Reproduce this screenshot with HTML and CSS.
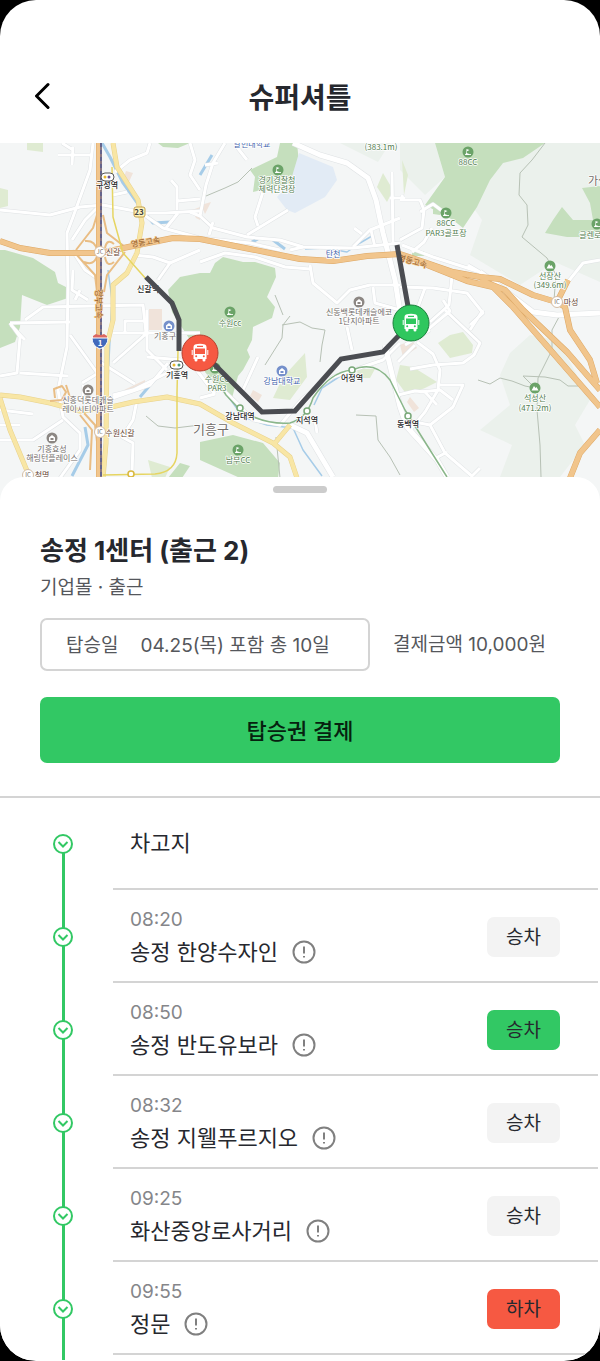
FILE: index.html
```
<!DOCTYPE html>
<html lang="ko">
<head>
  <meta charset="UTF-8">
  <meta name="viewport" content="width=device-width, initial-scale=1">
  <title>슈퍼셔틀</title>
  <link rel="stylesheet" href="styles.css">
</head>
<body>
  <div class="phone">
    <header class="header">
      <button type="button" class="back-button" aria-label="뒤로">
        <svg width="16" height="28" viewBox="0 0 16 28"><path d="M14 2.500L2.500 14L14 25.500"/></svg>
      </button>
      <h1 class="header-title">슈퍼셔틀</h1>
    </header>

    <svg class="map" viewBox="0 143 600 360" role="img" aria-label="노선 지도">
      <defs>
        <g id="streets">
          <path d="M0 210L50 215L80 207L103 205L140 212L163 228L200 238L250 243L280 250"/>
          <path d="M190 212L200 216L213 228L247 237L280 240L303 247L353 248L400 243"/>
          <path d="M93 143L90 170L73 217L67 233L68 287L67 347L58 390L63 417L80 433L80 450L60 478"/>
          <path d="M58 155H93M73 147L72 165M62 143L73 150M72 240L85 220L100 205M72 250L85 270L97 278"/>
          <path d="M115 172L130 160L147 153L150 143M113 195L127 192M138 213L166 213L200 211"/>
          <path d="M171 180L177 187L177 210M177 201L200 199M190 143L195 160L190 175L200 190M166 228L178 213"/>
          <path d="M225 143L213 163L206 185L200 216M218 163L205 165M236 146L247 160M209 235L213 222"/>
          <path d="M288 210L247 235M263 192L255 217L258 226M392 172L393 243M390 198H405"/>
          <path d="M400 218L370 230L353 247M371 230L375 247M354 228L362 234"/>
          <path d="M310 265L313 283L337 303L350 290L370 285L400 285M373 287L375 303L400 310M290 250L303 247"/>
          <path d="M200 262L225 253L255 257L285 267L310 269"/>
          <path d="M400 200L420 200L424 210L422 228L400 240M420 212L433 204L445 213M402 195L403 200"/>
          <path d="M402 245L433 257L480 272L468 265M412 252L424 242L432 228"/>
          <path d="M600 260L583 263L567 283M452 276L449 305L430 322M400 287L433 288L467 293L483 313L470 325M425 288L415 315"/>
          <path d="M445 310L480 343L474 355L463 363L433 365L410 369M483 310L470 330M415 340L450 311L443 300"/>
          <path d="M417 342L433 354L440 370L438 390L425 412L410 430M440 385L463 385L453 407L430 425M420 392L440 390L453 400M405 345L430 330M398 362L415 345"/>
          <path d="M398 395L415 391L425 392L437 405M404 420L430 425L445 453L473 477M436 458L447 452M473 475L480 468"/>
          <path d="M10 323L70 322M10 323L20 337L17 373L0 376M11 325L25 340M70 335L98 374M20 373L68 376M82 383L100 372"/>
          <path d="M113 333H200M147 310V350L167 370M147 321H125V333M200 355L167 373L133 390L113 395M113 363L147 333M100 362L135 384"/>
          <path d="M137 400L133 420L122 437L133 443L132 473M0 440L33 440L63 420M33 414L0 410M107 400L150 385L168 363"/>
          <path d="M25 320L43 307L143 305L146 333M73 270L72 290L88 300M158 280L170 263L153 257L133 255M170 263L200 250M75 300L80 290"/>
          <path d="M220 387L237 403L253 420L280 425L303 398L333 377L383 360L400 343M347 327L352 350M258 357L243 390M200 398L215 394"/>
          <path d="M83 385V398H107M0 425H20M147 357L182 360M195 368L215 394M317 433L315 420L303 415"/>
        </g>
        <g id="avenues">
          <path d="M293 143L320 155L347 163L368 178L376 200L383 233L395 280L402 325"/>
          <path d="M480 272L500 287L533 312L557 315L600 313"/>
          <path d="M290 425L307 433L333 477"/>
          <path d="M385 345L400 407L407 427L437 460L447 477"/>
        </g>
        <g id="bus">
          <path fill-rule="evenodd" d="M-5 -8.500Q0 -9.800 5 -8.500Q6.500 -8 6.500 -6V6H5.500V7Q5.500 8.500 4 8.500Q2.500 8.500 2.500 7V6H-2.500V7Q-2.500 8.500 -4 8.500Q-5.500 8.500 -5.500 7V6H-6.500V-6Q-6.500 -8 -5 -8.500ZM-3 -7.200V-6H3V-7.200ZM-5 -4.500V1H5V-4.500ZM-4.800 3.200A1 1 0 1 0 -2.800 3.200A1 1 0 1 0 -4.800 3.200M2.800 3.200A1 1 0 1 0 4.800 3.200A1 1 0 1 0 2.800 3.200"/>
          <path d="M-8.300 -3H-7.300V2H-8.300ZM7.300 -3H8.300V2H7.300Z"/>
        </g>
        <g id="golf">
          <circle r="5.500"/>
          <path class="glyph" d="M-3 2.500Q-1.500 .500 0 1.500T3 2V3H-3ZM-1.500 -3L1.500 -2L-1 -.800V1.500H-1.700Z"/>
        </g>
        <g id="mountain">
          <circle r="5.500"/>
          <path class="glyph" d="M-3.500 2.500L-1 -2L.500 0L1.500 -1L3.500 2.500Z"/>
        </g>
        <g id="building">
          <circle r="5.500"/>
          <path class="glyph" fill-rule="evenodd" d="M-3 -.500L0 -3L3 -.500V3H-3ZM-1.500 0V2H1.500V0Z"/>
        </g>
      </defs>

      <rect class="land" y="143" width="600" height="360"/>

      <!-- hills and parks -->
      <path class="terrain" d="M470 143H600V282L555 262L520 285L470 255L482 220L440 160ZM400 143H435L445 177L425 195L400 170ZM340 143H390L378 162Z"/>
      <path class="terrain" d="M510 353L530 335L555 340L570 362L590 400L575 425L585 445L560 477H500L512 445L480 430L510 405L500 375Z"/>
      <path class="forest" d="M0 250H5L33 258L55 272L58 283L68 288V298L47 305L22 295L20 327L15 342L0 348Z"/>
      <path class="forest" d="M168 290L180 277L200 273H210L215 263L223 257L243 262H255L275 268L276 277L267 297L275 307L272 318L253 327L252 340L247 350L250 357L243 370L238 376L232 398L218 388L205 372L190 340L172 312Z"/>
      <path class="forest" d="M280 143H297L299 163L290 183L253 192L255 177L250 170L277 157Z"/>
      <path class="forest" d="M435 143H545L523 158L503 163L490 180L477 207L463 228L453 220L425 205L445 177Z"/>
      <path class="forest" d="M582 188L600 186V237H567L545 233L553 220L562 207L573 220H593L590 203Z"/>
      <path class="forest" d="M200 442L233 435L263 443L280 463L278 478H240L200 460ZM168 478L180 463L190 466L182 478ZM158 143H190L178 148L163 147ZM433 209L441 210L440 215L433 214ZM412 251H424V256H412Z"/>
      <path class="park" d="M305 353L307 377L290 400L273 398L283 377ZM438 343L450 335L463 332L473 345L472 353L450 358ZM400 365L413 367L437 382L425 388L407 395L396 380ZM27 143H43V152L27 150ZM0 188L8 190V206L0 208ZM383 173L393 190L387 202L377 187ZM148 460L170 467L165 478H152ZM357 369H375L370 378H358ZM402 160L408 175L404 195Z"/>
      <path class="lake" d="M299 153L333 167L337 180L325 197L295 213L287 210L277 197L290 183Z"/>
      <path class="block" d="M149 309H162V330H149ZM126 171L133 173L128 184L124 177ZM201 205L211 202L205 214ZM400 345L412 340L417 348L403 357ZM410 397L419 408L414 412L407 402ZM124 390L145 380V385L126 393ZM192 210L200 207V220L196 218ZM253 390L262 395L258 402L250 396Z"/>

      <path class="trail" d="M206 196L225 188L238 182L252 168M290 316L283 325L282 338L265 365M282 325L300 322L312 328L325 330L322 345L320 362M545 143L532 160L520 173L519 195L527 205L528 225L522 237L547 258L556 275L554 300M478 380L490 384L500 378L512 381L525 386L535 388L523 376L545 377L560 380L568 386L578 386M559 317L552 330L552 350L538 378L537 410L540 445L541 477M146 416L158 426L175 428L200 425M356 415L376 416L378 440L390 457L400 475M275 295L283 315M276 437L280 478"/>

      <!-- water -->
      <path class="river" d="M102 143L110 157L123 183L140 207L153 223L170 222M200 175L212 155M250 243L258 239M167 365L140 397M85 427L88 445L72 476"/>
      <path class="river" d="M273 240L285 249"/>
      <path class="river thin" d="M305 249L325 248L347 252L360 243L372 236M225 392L243 417L267 425L293 428L303 450L322 476M108 270L112 300L108 380M314 405L322 388L345 373"/>

      <!-- roads -->
      <use href="#streets" class="street-edge"/>
      <use href="#avenues" class="avenue-edge"/>
      <use href="#streets" class="street"/>
      <use href="#avenues" class="avenue"/>
      <path class="main-edge" d="M113 143L117 167L138 200L142 223L137 253L127 273L113 285V320L107 345L106 443L103 478M0 395L20 397L50 403L80 411L107 408L133 402L167 397L200 404L233 423L273 443L290 457L297 478M290 425L275 443M0 398L10 430L30 478"/>
      <path class="main" d="M113 143L117 167L138 200L142 223L137 253L127 273L113 285V320L107 345L106 443L103 478M0 395L20 397L50 403L80 411L107 408L133 402L167 397L200 404L233 423L273 443L290 457L297 478M290 425L275 443M0 398L10 430L30 478"/>
      <path class="ramp" d="M97 215L93 228L76 250M103 215L107 233L125 247M76 254L95 275L97 292M104 292L107 275L125 252M85 241Q95 240 97 250M84 262Q94 266 97 256M105 248Q107 238 114 244M105 257Q107 268 114 262M50 401L62 400L66 392L62 386L54 389L55 398M66 385L72 404M80 415L92 430L90 470M84 413L95 425L98 450"/>
      <path class="highway-edge" d="M0 241L20 248L50 253H100L133 246L173 238L200 239L250 249L300 259L333 261L367 256L400 254L427 263L453 272L480 277L500 279L533 295L553 301M427 265L467 281L493 287L513 307L600 407M480 280L505 290L523 310L567 352L600 390M568 280L557 302L565 307L570 330L590 360L597 383M600 430L580 453L570 478M99 143V478"/>
      <path class="highway" d="M0 241L20 248L50 253H100L133 246L173 238L200 239L250 249L300 259L333 261L367 256L400 254L427 263L453 272L480 277L500 279L533 295L553 301M427 265L467 281L493 287L513 307L600 407M480 280L505 290L523 310L567 352L600 390M568 280L557 302L565 307L570 330L590 360L597 383M600 430L580 453L570 478M99 143V478"/>
      <path class="rail" d="M101 143V478"/>
      <path class="rail-dash" d="M101 143V478"/>
      <path class="subway-yellow" d="M112 167L113 217L123 253L147 280M178 350L177 393V453Q176 472 155 474L103 475"/>
      <path class="subway-green" d="M214 375L226 395L240 410Q265 425 290 423Q307 418 313 398Q330 372 352 370Q375 360 390 380L405 410L430 450L447 477"/>
      <g class="station">
        <circle cx="240" cy="408" r="3"/>
        <circle cx="307" cy="411" r="3"/>
        <circle cx="352" cy="370" r="3"/>
        <circle cx="408" cy="416" r="3"/>
        <circle class="station-yellow" cx="131" cy="474" r="3"/>
      </g>

      <!-- places -->
      <g class="poi-green">
        <use href="#golf" x="278" y="170"/>
        <use href="#golf" x="468" y="152"/>
        <use href="#golf" x="446" y="213"/>
        <use href="#golf" x="597" y="224"/>
        <use href="#golf" x="230" y="312"/>
        <use href="#golf" x="215" y="368"/>
        <use href="#golf" x="238" y="450"/>
        <use href="#mountain" x="550" y="266"/>
        <use href="#mountain" x="535" y="388"/>
      </g>
      <g class="poi-gray">
        <use href="#building" x="359" y="302"/>
        <use href="#building" x="88" y="390"/>
        <use href="#building" x="52" y="438"/>
      </g>
      <g class="poi-blue">
        <use href="#building" x="169" y="326"/>
        <use href="#building" x="282" y="371"/>
      </g>

      <g class="label green">
        <text x="277" y="183">경기경찰청</text>
        <text x="277" y="192">체력단련장</text>
        <text x="381" y="150">(383.1m)</text>
        <text x="468" y="165">88CC</text>
        <text x="446" y="226">88CC</text>
        <text x="446" y="236">PAR3골프장</text>
        <text x="594" y="238">글렌로스</text>
        <text x="550" y="279">선장산</text>
        <text x="550" y="288">(349.6m)</text>
        <text x="535" y="401">석성산</text>
        <text x="535" y="411">(471.2m)</text>
        <text x="230" y="326">수원cc</text>
        <text x="217" y="382">수원CC</text>
        <text x="217" y="391">PAR3</text>
        <text x="238" y="463">남부CC</text>
      </g>
      <g class="label gray">
        <text x="359" y="315">신동백롯데캐슬에코</text>
        <text x="359" y="324">1단지아파트</text>
        <text x="88" y="403">신흥덕롯데캐슬</text>
        <text x="88" y="412">레이시티아파트</text>
        <text x="52" y="452">기흥효성</text>
        <text x="52" y="461">해링턴플레이스</text>
        <text x="165" y="339">기흥구</text>
        <text class="large" x="211" y="434">기흥구</text>
        <text class="medium" x="598" y="185">가실</text>
      </g>
      <g class="label blue">
        <text x="252" y="147">칼빈대학교</text>
        <text x="282" y="384">강남대학교</text>
        <text x="333" y="257">탄천</text>
      </g>
      <g class="label station-name">
        <text x="107" y="188">구성역</text>
        <text x="148" y="292">신갈역</text>
        <text x="177" y="378">기흥역</text>
        <text x="240" y="419">강남대역</text>
        <text x="307" y="423">지석역</text>
        <text x="352" y="381">어정역</text>
        <text x="408" y="427">동백역</text>
      </g>
      <g class="label brown">
        <text x="113" y="255">신갈</text>
        <text x="120" y="436">수원신갈</text>
        <text x="571" y="305">마성</text>
        <text x="42" y="478">청명</text>
        <text class="road-name" transform="translate(146 245) rotate(-9)">영동고속</text>
        <text class="road-name" transform="translate(412 264) rotate(15)">영동고속</text>
        <text class="road-name" transform="translate(96 304) rotate(90)">경부고속</text>
      </g>

      <g class="junction">
        <circle cx="100" cy="252" r="5.500"/>
        <circle cx="100" cy="432" r="5.500"/>
        <circle cx="557" cy="302" r="5.500"/>
        <circle cx="28" cy="475" r="5.500"/>
        <text x="100" y="254">JC</text>
        <text x="100" y="434">IC</text>
        <text x="557" y="304">IC</text>
        <text x="28" y="477">IC</text>
      </g>
      <g class="badge">
        <rect x="134" y="207" width="11" height="10" rx="2"/>
        <text x="139" y="215">23</text>
      </g>
      <path class="shield-top" d="M93 336L96 334Q100 336 104 334L107 336V339H93Z"/>
      <path class="shield" d="M92 338H108Q108 346 100 349Q92 346 92 338Z"/>
      <text class="shield-text" x="100" y="346">1</text>
      <g class="interchange">
        <rect x="101" y="173" width="13" height="8" rx="4"/>
        <circle class="yellow" cx="105" cy="177" r="1.500"/>
        <circle class="purple" cx="109" cy="177" r="1.500"/>
        <rect x="170" y="361" width="13" height="8" rx="4"/>
        <circle class="yellow" cx="174" cy="365" r="1.500"/>
        <circle class="teal" cx="179" cy="365" r="1.500"/>
      </g>

      <!-- shuttle route -->
      <path class="route" d="M146 277L172 303L179 320V351M213 363L262 412L295 411L341 359L383 352L411 323L397 245"/>
      <circle class="marker marker-end" cx="200" cy="353" r="18"/>
      <use href="#bus" class="bus" x="200" y="353"/>
      <circle class="marker marker-start" cx="411" cy="323" r="18"/>
      <use href="#bus" class="bus" x="411" y="323"/>
    </svg>

    <main class="sheet">
      <div class="handle"></div>
      <section class="summary">
        <h2 class="route-name">송정 1센터 (출근 2)</h2>
        <p class="route-type">기업몰 · 출근</p>
        <div class="payment">
          <button type="button" class="date-button">
            <span>탑승일</span>
            <span>04.25(목) 포함 총 10일</span>
          </button>
          <p class="price">결제금액 10,000원</p>
        </div>
        <button type="button" class="pay-button">탑승권 결제</button>
      </section>

      <ol class="stops">
        <li class="stop">
          <svg class="stop-marker" viewBox="0 0 20 20"><circle cx="10" cy="10" r="9"/><path d="M5.500 8L10 12.500L14.500 8"/></svg>
          <div class="stop-body garage">
            <span class="stop-name">차고지</span>
          </div>
        </li>
        <li class="stop">
          <svg class="stop-marker" viewBox="0 0 20 20"><circle cx="10" cy="10" r="9"/><path d="M5.500 8L10 12.500L14.500 8"/></svg>
          <div class="stop-body">
            <div class="stop-info">
              <time class="stop-time">08:20</time>
              <div class="stop-line">
                <span class="stop-name">송정 한양수자인</span>
                <button type="button" class="info-button" aria-label="정류장 정보"><svg viewBox="0 0 24 24"><circle cx="12" cy="12" r="10.500"/><path d="M12 6.500V13.500M12 16V17.500"/></svg></button>
              </div>
            </div>
            <button type="button" class="ride-button">승차</button>
          </div>
        </li>
        <li class="stop">
          <svg class="stop-marker" viewBox="0 0 20 20"><circle cx="10" cy="10" r="9"/><path d="M5.500 8L10 12.500L14.500 8"/></svg>
          <div class="stop-body">
            <div class="stop-info">
              <time class="stop-time">08:50</time>
              <div class="stop-line">
                <span class="stop-name">송정 반도유보라</span>
                <button type="button" class="info-button" aria-label="정류장 정보"><svg viewBox="0 0 24 24"><circle cx="12" cy="12" r="10.500"/><path d="M12 6.500V13.500M12 16V17.500"/></svg></button>
              </div>
            </div>
            <button type="button" class="ride-button on">승차</button>
          </div>
        </li>
        <li class="stop">
          <svg class="stop-marker" viewBox="0 0 20 20"><circle cx="10" cy="10" r="9"/><path d="M5.500 8L10 12.500L14.500 8"/></svg>
          <div class="stop-body">
            <div class="stop-info">
              <time class="stop-time">08:32</time>
              <div class="stop-line">
                <span class="stop-name">송정 지웰푸르지오</span>
                <button type="button" class="info-button" aria-label="정류장 정보"><svg viewBox="0 0 24 24"><circle cx="12" cy="12" r="10.500"/><path d="M12 6.500V13.500M12 16V17.500"/></svg></button>
              </div>
            </div>
            <button type="button" class="ride-button">승차</button>
          </div>
        </li>
        <li class="stop">
          <svg class="stop-marker" viewBox="0 0 20 20"><circle cx="10" cy="10" r="9"/><path d="M5.500 8L10 12.500L14.500 8"/></svg>
          <div class="stop-body">
            <div class="stop-info">
              <time class="stop-time">09:25</time>
              <div class="stop-line">
                <span class="stop-name">화산중앙로사거리</span>
                <button type="button" class="info-button" aria-label="정류장 정보"><svg viewBox="0 0 24 24"><circle cx="12" cy="12" r="10.500"/><path d="M12 6.500V13.500M12 16V17.500"/></svg></button>
              </div>
            </div>
            <button type="button" class="ride-button">승차</button>
          </div>
        </li>
        <li class="stop">
          <svg class="stop-marker" viewBox="0 0 20 20"><circle cx="10" cy="10" r="9"/><path d="M5.500 8L10 12.500L14.500 8"/></svg>
          <div class="stop-body">
            <div class="stop-info">
              <time class="stop-time">09:55</time>
              <div class="stop-line">
                <span class="stop-name">정문</span>
                <button type="button" class="info-button" aria-label="정류장 정보"><svg viewBox="0 0 24 24"><circle cx="12" cy="12" r="10.500"/><path d="M12 6.500V13.500M12 16V17.500"/></svg></button>
              </div>
            </div>
            <button type="button" class="ride-button off">하차</button>
          </div>
        </li>
      </ol>
    </main>
  </div>
</body>
</html>
```
FILE: styles.css
```
* {
  box-sizing: border-box;
}

body {
  margin: 0;
  background: #000;
  font-family: Inter, "Noto Sans CJK KR", sans-serif;
  color: #26282e;
}

h1, h2, p, ol {
  margin: 0;
  padding: 0;
}

button {
  border: none;
  padding: 0;
  background: none;
  font-family: inherit;
  color: inherit;
  cursor: pointer;
}

.phone {
  background: #fff;
  min-height: 100vh;
  border-radius: 36px;
  overflow: hidden;
}

/* header */
.header {
  display: grid;
  grid-template-columns: 1fr auto 1fr;
  align-items: center;
  height: 143px;
  padding: 49px 34px 0;
}

.back-button {
  justify-self: start;
  display: flex;
}

.back-button svg {
  fill: none;
  stroke: #000;
  stroke-width: 3;
  stroke-linecap: round;
  stroke-linejoin: round;
}

.header-title {
  font-size: 28px;
  font-weight: 700;
}

/* map */
.map {
  display: block;
  width: 100%;
  fill: none;
  font-family: "Noto Sans CJK KR", sans-serif;
  stroke-linejoin: round;
}

.land { fill: #f4f6f6; }
.terrain { fill: #ebf1ec; }
.forest { fill: #c5dfbd; }
.park { fill: #dfebd2; }
.lake { fill: #e2ebf5; }
.block { fill: #f0e3da; }
.trail { stroke: #b7c1b5; stroke-width: 1; }
.river { stroke: #a6cce8; stroke-width: 3; }
.river.thin { stroke-width: 1.5; }
.street-edge { stroke: #dfe2e4; stroke-width: 4; }
.street { stroke: #fff; stroke-width: 3; }
.avenue-edge { stroke: #dfe2e4; stroke-width: 6; }
.avenue { stroke: #fff; stroke-width: 5; }
.main-edge { stroke: #e8d28c; stroke-width: 5; }
.main { stroke: #f8e6a5; stroke-width: 4; }
.ramp { stroke: #e9bd84; stroke-width: 2; }
.highway-edge { stroke: #dda866; stroke-width: 6; }
.highway { stroke: #f1c58c; stroke-width: 5; }
.rail { stroke: #8b7883; stroke-width: 2; }
.rail-dash { stroke: #65648c; stroke-width: 2; stroke-dasharray: 4 3; }
.subway-yellow { stroke: #e6d562; stroke-width: 1.5; }
.subway-green { stroke: #8ab68a; stroke-width: 1.5; }
.station { fill: #fff; stroke: #79a878; stroke-width: 1.5; }
.station-yellow { stroke: #d9b83e; }

.poi-green { fill: #6ba368; }
.poi-gray { fill: #8c8783; }
.poi-blue { fill: #7590cb; }
.glyph { fill: #fff; }

.label {
  font-size: 8px;
  text-anchor: middle;
  paint-order: stroke;
  stroke: #fff;
  stroke-width: 1.5;
}

.label.green { fill: #527d4f; }
.label.gray { fill: #716c69; }
.label.blue { fill: #4263ac; }
.label.brown { fill: #654331; }
.label.station-name { fill: #27272a; font-weight: 500; }
.label .medium { font-size: 11px; }
.label .large { font-size: 13px; }
.label .road-name { fill: #955f2d; stroke: #f1c58c; }

.junction circle { fill: #fff; stroke: #d4bda5; }
.junction text { fill: #77706a; font-size: 6px; text-anchor: middle; }
.badge rect { fill: #fff3bb; stroke: #c4a24c; }
.badge text { fill: #444; font-size: 8px; font-weight: 700; text-anchor: middle; }
.shield-top { fill: #db6761; }
.shield { fill: #4169bb; stroke: #fff; }
.shield-text { fill: #fff; font-size: 8px; font-weight: 700; text-anchor: middle; }
.interchange rect { fill: #fff; stroke: #555; }
.interchange .yellow { fill: #e9b92c; }
.interchange .purple { fill: #675292; }
.interchange .teal { fill: #4f9a79; }

.route { stroke: #4a4c51; stroke-width: 5; stroke-linejoin: miter; }
.marker { stroke-width: 1; }
.marker-end { fill: #f65942; stroke: #b8402f; }
.marker-start { fill: #2fc75e; stroke: #19803a; }
.bus { fill: #fff; }

/* bottom sheet */
.sheet {
  position: relative;
  margin-top: -26px;
  padding-top: 9px;
  background: #fff;
  border-radius: 24px 24px 0 0;
}

.handle {
  width: 54px;
  height: 7px;
  margin: 0 auto;
  border-radius: 4px;
  background: #ccc;
}

.summary {
  padding: 42px 40px 33px;
  border-bottom: 2px solid #d4d4d4;
}

.route-name {
  font-size: 26px;
  line-height: 32px;
  font-weight: 700;
}

.route-type {
  margin-top: 7px;
  font-size: 19px;
  line-height: 28px;
  color: #55575c;
}

.payment {
  display: flex;
  align-items: center;
  gap: 23px;
  margin: 16px 0 26px;
  font-size: 19px;
  color: #55575c;
}

.date-button {
  flex: 1;
  max-width: 330px;
  height: 53px;
  display: flex;
  align-items: center;
  gap: 22px;
  padding: 0 24px 2px;
  border: 2px solid #d4d4d4;
  border-radius: 7px;
  font-size: 19px;
  white-space: nowrap;
}

.price {
  padding-bottom: 4px;
  white-space: nowrap;
}

.pay-button {
  width: 100%;
  height: 66px;
  padding-bottom: 3px;
  border-radius: 7px;
  background: #32c864;
  color: #06210f;
  font-size: 22px;
  font-weight: 500;
}

/* stops */
.stops {
  list-style: none;
  padding-bottom: 5px;
  overflow: hidden;
}

.stop {
  position: relative;
  padding: 0 2px 0 113px;
}

/* green line running on to the next stop */
.stop::before {
  content: "";
  position: absolute;
  left: 62px;
  top: 50%;
  width: 3px;
  height: 100%;
  background: #32c864;
}

.stop-marker {
  position: absolute;
  z-index: 1;
  left: 53px;
  top: calc(50% - 10px);
  width: 20px;
  height: 20px;
  fill: #fff;
  stroke: #32c864;
  stroke-width: 2;
}

.stop-body {
  display: flex;
  align-items: center;
  justify-content: space-between;
  height: 93px;
  padding: 2px 38px 0 17px;
  border-bottom: 2px solid #d4d4d4;
}

.stop-body.garage {
  height: 92px;
  padding-top: 0;
}

.stop-time {
  display: block;
  font-size: 19px;
  line-height: 30px;
  color: #85868a;
}

.stop-line {
  display: flex;
  align-items: center;
  gap: 14px;
}

.stop-name {
  font-size: 22px;
  line-height: 34px;
}

.info-button {
  display: flex;
}

.info-button svg {
  width: 24px;
  height: 24px;
  fill: none;
  stroke: #808080;
  stroke-width: 2;
}

.ride-button {
  width: 73px;
  height: 40px;
  padding-bottom: 2px;
  border-radius: 7px;
  background: #f3f3f3;
  font-size: 19px;
}

.ride-button.on {
  background: #32c864;
}

.ride-button.off {
  background: #f65942;
}
```
